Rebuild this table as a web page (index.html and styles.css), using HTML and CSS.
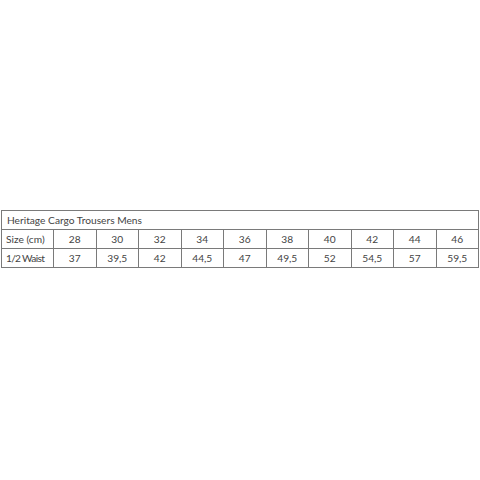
FILE: index.html
```html
<!DOCTYPE html>
<html>
<head>
<meta charset="utf-8">
<link rel="stylesheet" href="styles.css">
</head>
<body>
<main class="page">
<table class="size-table">
<colgroup>
<col class="label-col">
<col span="10">
</colgroup>
<tr><td class="title" colspan="11">Heritage Cargo Trousers Mens</td></tr>
<tr><td class="label">Size (cm)</td><td>28</td><td>30</td><td>32</td><td>34</td><td>36</td><td>38</td><td>40</td><td>42</td><td>44</td><td>46</td></tr>
<tr><td class="label tight">1/2 Waist</td><td>37</td><td>39,5</td><td>42</td><td>44,5</td><td>47</td><td>49,5</td><td>52</td><td>54,5</td><td>57</td><td>59,5</td></tr>
</table>
</main>
</body>
</html>
```
FILE: styles.css
```css
html, body { margin: 0; padding: 0; background: #fff; }
.page {
  height: 480px;
  display: flex;
  align-items: center;
  padding: 0 1px 2px 1px;
  box-sizing: border-box;
}
.size-table {
  width: 100%;
  border-collapse: collapse;
  table-layout: fixed;
  font-family: "Lato", sans-serif;
  font-size: 10.2px;
  color: #444;
}
.label-col { width: 52px; }
.size-table td {
  border: 1px solid #7a7a7a;
  height: 18px;
  padding: 0 2px;
  text-align: center;
  vertical-align: middle;
  white-space: nowrap;
  overflow: hidden;
}
.size-table td.title, .size-table td.label { text-align: left; padding-left: 4px; }
.size-table td.title { padding-left: 5px; }
.size-table td.tight { letter-spacing: -0.7px; }
```
